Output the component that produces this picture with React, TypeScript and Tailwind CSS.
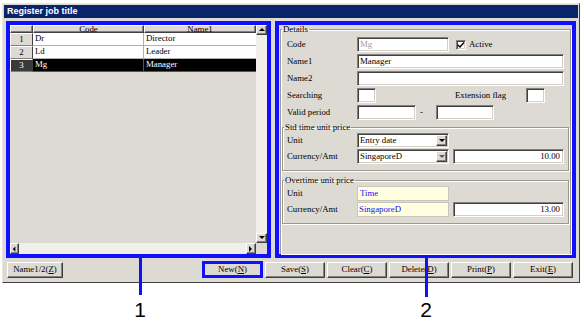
import React from 'react';

const sunken =
  'bg-white border border-t-[#808080] border-l-[#808080] border-r-white border-b-white shadow-[inset_1px_1px_0_#404040,inset_-1px_-1px_0_#d4d0c8]';
const raised =
  'bg-[#dcdad2] border border-t-white border-l-white border-r-[#404040] border-b-[#404040] shadow-[inset_-1px_-1px_0_#808080]';
const etched = 'border border-[#9a9890] shadow-[1px_1px_0_white,inset_1px_1px_0_white]';

const Arrow: React.FC<{ dir: 'up' | 'down' | 'left' | 'right'; grey?: boolean }> = ({ dir, grey }) => {
  const pts = {
    up: '1,5 4,2 7,5',
    down: '1,2 4,5 7,2',
    left: '5,1 2,4 5,7',
    right: '2,1 5,4 2,7',
  }[dir];
  return (
    <svg width="8" height="8" viewBox="0 0 8 8">
      <polygon points={pts} fill={grey ? '#5a5a5a' : '#000'} />
    </svg>
  );
};

const Label: React.FC<{ children: React.ReactNode; w?: string }> = ({ children, w = 'w-[70px]' }) => (
  <span className={`${w} shrink-0 leading-none`}>{children}</span>
);

const Select: React.FC<{ value: string; grey?: boolean }> = ({ value, grey }) => (
  <div className={`${sunken} w-[92px] h-[15px] flex items-center`}>
    <span className="flex-1 pl-[2px] leading-none">{value}</span>
    <div className={`${raised} w-[11px] h-[11px] mr-[1px] flex items-center justify-center`}>
      <Arrow dir="down" grey={grey} />
    </div>
  </div>
);

const rows = [
  { n: '1', code: 'Dr', name: 'Director' },
  { n: '2', code: 'Ld', name: 'Leader' },
  { n: '3', code: 'Mg', name: 'Manager', sel: true },
];

const buttons = ['Save', 'Clear', 'Delete', 'Print', 'Exit'];
const keys = ['S', 'C', 'D', 'P', 'E'];

export default function App() {
  return (
    <div
      className="relative w-[584px] h-[327px] bg-white overflow-hidden text-[8.8px] text-black"
      style={{ fontFamily: '"Liberation Serif", "Times New Roman", serif' }}
    >
      <div className="pt-[3px] pl-[2px]">
        <div className="w-[578px] h-[280px] bg-[#dcdad2] border border-t-[#e8e6e0] border-l-[#e8e6e0] border-r-[#404040] border-b-[#404040] flex flex-col">
          {/* title bar */}
          <div className="mx-[1px] mt-[1px] h-[13px] bg-[#0a246a] flex items-center pl-[3px]">
            <span
              className="text-white font-bold text-[9px] leading-none"
              style={{ fontFamily: '"Liberation Sans", Arial, sans-serif' }}
            >
              Register job title
            </span>
          </div>

          {/* main area */}
          <div className="flex gap-[4px] px-[3px] mt-[3px]">
            {/* grid */}
            <div className="w-[265px] h-[237px] border-4 border-[#1010ff] flex flex-col bg-[#dcdad2]">
              <div className="flex h-[218px]">
                <div className="w-[246px] flex flex-col">
                  <div className="flex h-[8px] overflow-hidden">
                    <div className={`${raised} w-[23px]`} />
                    <div className={`${raised} w-[111px] text-center leading-[6px]`}>Code</div>
                    <div className={`${raised} w-[112px] text-center leading-[6px]`}>Name1</div>
                  </div>
                  {rows.map((r) => (
                    <div key={r.n} className="flex h-[13px]">
                      <div
                        className={`w-[23px] flex items-center justify-center border border-t-white border-l-white border-r-[#404040] border-b-[#808080] ${
                          r.sel ? 'bg-[#3a3a3a] text-white' : 'bg-[#dcdad2]'
                        }`}
                      >
                        {r.n}
                      </div>
                      <div
                        className={`w-[111px] flex items-center pl-[2px] border-r border-b ${
                          r.sel ? 'bg-black text-white border-[#555]' : 'bg-white border-[#b0b0b0]'
                        }`}
                      >
                        {r.code}
                      </div>
                      <div
                        className={`w-[112px] flex items-center pl-[2px] border-b ${
                          r.sel ? 'bg-black text-white border-[#555]' : 'bg-white border-[#b0b0b0]'
                        }`}
                      >
                        {r.name}
                      </div>
                    </div>
                  ))}
                </div>
                <div className="w-[11px] flex flex-col bg-[#f0efea]">
                  <div className={`${raised} h-[10px] flex items-center justify-center`}>
                    <Arrow dir="up" />
                  </div>
                  <div className="flex-1" />
                  <div className={`${raised} h-[10px] flex items-center justify-center`}>
                    <Arrow dir="down" />
                  </div>
                </div>
              </div>
              <div className="flex h-[11px]">
                <div className="w-[246px] flex bg-[#f0efea]">
                  <div className={`${raised} w-[9px] flex items-center justify-center`}>
                    <Arrow dir="left" />
                  </div>
                  <div className="flex-1" />
                  <div className={`${raised} w-[10px] flex items-center justify-center`}>
                    <Arrow dir="right" />
                  </div>
                </div>
                <div className="w-[11px] bg-[#dcdad2]" />
              </div>
            </div>

            {/* details */}
            <div className="w-[301px] h-[237px] border-4 border-[#1010ff] bg-[#dcdad2]">
              <fieldset className={`${etched} border-b-0 mx-[1px] h-[229px]`}>
                <legend className="ml-[1px] px-[1px] leading-[9px]">Details</legend>
                <div className="flex flex-col gap-[2px] pl-[6px] mt-[3px]">
                  <div className="flex items-center h-[15px]">
                    <Label>Code</Label>
                    <div className={`${sunken} w-[92px] h-[15px] flex items-center pl-[2px] text-[#a0a0a0]`}>Mg</div>
                    <div className={`${sunken} ml-[7px] w-[10px] h-[10px] flex items-center justify-center`}>
                      <svg width="8" height="8" viewBox="0 0 8 8">
                        <path d="M1 4 L3 6 L7 1.5" stroke="#000" strokeWidth="1.4" fill="none" />
                      </svg>
                    </div>
                    <span className="ml-[3px] leading-none">Active</span>
                  </div>
                  <div className="flex items-center h-[15px]">
                    <Label>Name1</Label>
                    <div className={`${sunken} w-[207px] h-[15px] flex items-center pl-[2px]`}>Manager</div>
                  </div>
                  <div className="flex items-center h-[15px]">
                    <Label>Name2</Label>
                    <div className={`${sunken} w-[207px] h-[15px]`} />
                  </div>
                  <div className="flex items-center h-[15px]">
                    <Label>Searching</Label>
                    <div className={`${sunken} w-[19px] h-[15px]`} />
                    <span className="ml-[79px] w-[71px] leading-none">Extension flag</span>
                    <div className={`${sunken} w-[19px] h-[15px]`} />
                  </div>
                  <div className="flex items-center h-[15px]">
                    <Label>Valid period</Label>
                    <div className={`${sunken} w-[59px] h-[15px]`} />
                    <span className="w-[20px] pl-[4px] leading-none">-</span>
                    <div className={`${sunken} w-[58px] h-[15px]`} />
                  </div>
                </div>

                <fieldset className={`${etched} mx-[1px] mt-[3px] h-[48px]`}>
                  <legend className="ml-[1px] px-[1px] leading-[9px]">Std time unit price</legend>
                  <div className="flex flex-col gap-[1px] pl-[4px] mt-[1px]">
                    <div className="flex items-center h-[15px]">
                      <Label>Unit</Label>
                      <Select value="Entry date" />
                    </div>
                    <div className="flex items-center h-[15px]">
                      <Label>Currency/Amt</Label>
                      <Select value="SingaporeD" grey />
                      <div className={`${sunken} ml-[4px] w-[111px] h-[15px] flex items-center justify-end pr-[3px]`}>
                        10.00
                      </div>
                    </div>
                  </div>
                </fieldset>

                <fieldset className={`${etched} mx-[1px] mt-[5px] h-[48px]`}>
                  <legend className="ml-[1px] px-[1px] leading-[9px]">Overtime unit price</legend>
                  <div className="flex flex-col gap-[1px] pl-[4px] mt-[1px]">
                    <div className="flex items-center h-[15px]">
                      <Label>Unit</Label>
                      <div className="w-[92px] h-[15px] bg-[#ffffe0] border border-[#c8c6be] flex items-center pl-[2px] text-[#1010ff]">
                        Time
                      </div>
                    </div>
                    <div className="flex items-center h-[15px]">
                      <Label>Currency/Amt</Label>
                      <div className="w-[92px] h-[15px] bg-[#ffffe0] border border-[#c8c6be] flex items-center pl-[1px] text-[#1010ff]">
                        SingaporeD
                      </div>
                      <div className={`${sunken} ml-[4px] w-[111px] h-[15px] flex items-center justify-end pr-[3px]`}>
                        13.00
                      </div>
                    </div>
                  </div>
                </fieldset>
              </fieldset>
            </div>
          </div>

          {/* buttons */}
          <div className="flex items-center mt-[3px] pl-[4px] pr-[6px] h-[17px]">
            <div className={`${raised} w-[56px] h-[16px] flex items-center justify-center`}>
              Name1/2(<span className="underline">Z</span>)
            </div>
            <div className="flex-1" />
            <div className="flex items-center gap-[2px]">
              <div className="w-[61px] h-[17px] border-[3px] border-[#1010ff] bg-[#dcdad2] flex items-center justify-center">
                New(<span className="underline">N</span>)
              </div>
              {buttons.map((b, i) => (
                <div key={b} className={`${raised} w-[60px] h-[16px] flex items-center justify-center`}>
                  {b}(<span className="underline">{keys[i]}</span>)
                </div>
              ))}
            </div>
          </div>
        </div>
      </div>

      {/* callouts */}
      <div className="absolute left-[139px] top-[258px] w-[3px] h-[37px] bg-[#1010ff]" />
      <div
        className="absolute left-[130px] top-[299px] w-[20px] text-center text-[21px] leading-[21px]"
        style={{ fontFamily: '"Liberation Sans", Arial, sans-serif' }}
      >
        1
      </div>
      <div className="absolute left-[425px] top-[258px] w-[3px] h-[39px] bg-[#1010ff]" />
      <div
        className="absolute left-[416px] top-[299px] w-[20px] text-center text-[21px] leading-[21px]"
        style={{ fontFamily: '"Liberation Sans", Arial, sans-serif' }}
      >
        2
      </div>
    </div>
  );
}
